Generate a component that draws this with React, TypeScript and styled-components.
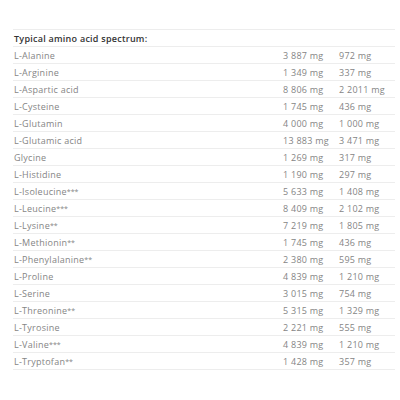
import styled, { createGlobalStyle } from 'styled-components';

const GlobalStyle = createGlobalStyle`
  body {
    margin: 0;
    background: #ffffff;
    font-family: "Open Sans", "Noto Sans", sans-serif;
  }
`;

const rows: [string, string, string][] = [
  ['L-Alanine', '3 887 mg', '972 mg'],
  ['L-Arginine', '1 349 mg', '337 mg'],
  ['L-Aspartic acid', '8 806 mg', '2 2011 mg'],
  ['L-Cysteine', '1 745 mg', '436 mg'],
  ['L-Glutamin', '4 000 mg', '1 000 mg'],
  ['L-Glutamic acid', '13 883 mg', '3 471 mg'],
  ['Glycine', '1 269 mg', '317 mg'],
  ['L-Histidine', '1 190 mg', '297 mg'],
  ['L-Isoleucine***', '5 633 mg', '1 408 mg'],
  ['L-Leucine***', '8 409 mg', '2 102 mg'],
  ['L-Lysine**', '7 219 mg', '1 805 mg'],
  ['L-Methionin**', '1 745 mg', '436 mg'],
  ['L-Phenylalanine**', '2 380 mg', '595 mg'],
  ['L-Proline', '4 839 mg', '1 210 mg'],
  ['L-Serine', '3 015 mg', '754 mg'],
  ['L-Threonine**', '5 315 mg', '1 329 mg'],
  ['L-Tyrosine', '2 221 mg', '555 mg'],
  ['L-Valine***', '4 839 mg', '1 210 mg'],
  ['L-Tryptofan**', '1 428 mg', '357 mg'],
];

// split trailing asterisks off so they can be drawn smaller, like the original
const splitName = (name: string) => {
  const m = name.match(/^(.*?)(\*+)$/);
  return m ? [m[1], m[2]] : [name, ''];
};

export default function App() {
  return (
    <>
      <GlobalStyle />
      <Page>
        <Table>
          <Row>
            <HeadCell>Typical amino acid spectrum:</HeadCell>
            <Cell />
            <Cell />
          </Row>
          {rows.map(([name, a, b]) => {
            const [label, stars] = splitName(name);
            return (
              <Row key={name}>
                <Cell>
                  {label}
                  {stars && <Stars>{stars}</Stars>}
                </Cell>
                <Cell>{a}</Cell>
                <Cell>{b}</Cell>
              </Row>
            );
          })}
        </Table>
      </Page>
    </>
  );
}

const Page = styled.div`
  padding: 29px 5px 0 13px;
`;

const Table = styled.div`
  width: 382px;
  border-top: 1px solid #ededed;
`;

const Row = styled.div`
  display: grid;
  grid-template-columns: 269px 56px 1fr;
  height: 16px;
  align-items: center;
  border-bottom: 1px solid #ededed;
`;

const Cell = styled.div`
  padding-left: 1px;
  font-size: 9px;
  letter-spacing: 0.25px;
  color: #858585;
  white-space: nowrap;
`;

const Stars = styled.span`
  font-size: 7px;
  letter-spacing: 0;
  vertical-align: 1px;
`;

const HeadCell = styled(Cell)`
  font-weight: 600;
  letter-spacing: 0.25px;
  color: #333333;
`;
